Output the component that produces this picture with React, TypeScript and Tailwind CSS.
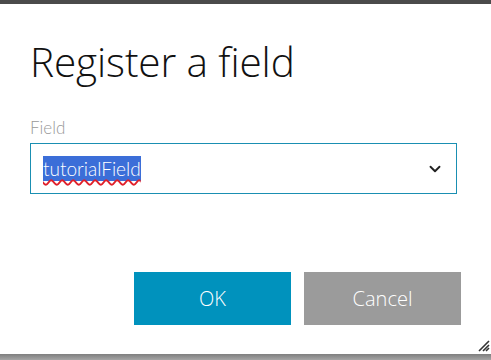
import { ChevronDown } from 'lucide-react';

export default function App() {
  return (
    <div className="flex h-[360px] w-[491px] flex-col overflow-hidden bg-[#8d8d8d]">
      {/* top strip */}
      <div className="h-[4px] bg-[#4b4b4b]" />

      <div className="flex flex-1">
        {/* dialog */}
        <div className="relative flex flex-1 flex-col bg-white px-[30px] pt-[32px] font-['Open_Sans',sans-serif]">
          <h1 className="text-[40.5px] font-light leading-[52px] tracking-[-0.1px] text-[#111]">
            Register a field
          </h1>

          <label className="mt-[29px] font-['Lato',sans-serif] text-[17px] font-light leading-[22px] text-[#999]">
            Field
          </label>
          <div className="mt-[4px] flex h-[51px] w-[427px] items-center justify-between border border-[#1a8fb2] pl-[12px] pr-[12px]">
            <span className="bg-[#3b6ed8] font-['Lato',sans-serif] text-[19px] font-light leading-[25px] text-white underline decoration-[#e0202a] decoration-wavy decoration-[1.5px] underline-offset-[3px]">
              tutorialField
            </span>
            <ChevronDown className="h-[18px] w-[18px] text-[#222]" strokeWidth={2.5} />
          </div>

          <div className="mt-[78px] flex gap-[13px] pl-[104px]">
            <button className="h-[53px] w-[157px] bg-[#0092bd] text-[20px] font-light text-white">
              OK
            </button>
            <button className="h-[53px] w-[157px] bg-[#9b9b9b] text-[20px] font-light text-white">
              Cancel
            </button>
          </div>

          {/* resize grip */}
          <svg className="absolute bottom-[2px] right-[1px]" width="14" height="14" viewBox="0 0 14 14">
            <path d="M13 3 L3 13 M13 7 L7 13 M13 10 L10 13" stroke="#333" strokeWidth="1.6" />
          </svg>
        </div>
        <div className="w-[2px] bg-[#8a8a8a]" />
      </div>

      {/* bottom strip */}
      <div className="h-[6px] bg-gradient-to-b from-[#7f7f7f] to-[#a5a5a5]" />
    </div>
  );
}
